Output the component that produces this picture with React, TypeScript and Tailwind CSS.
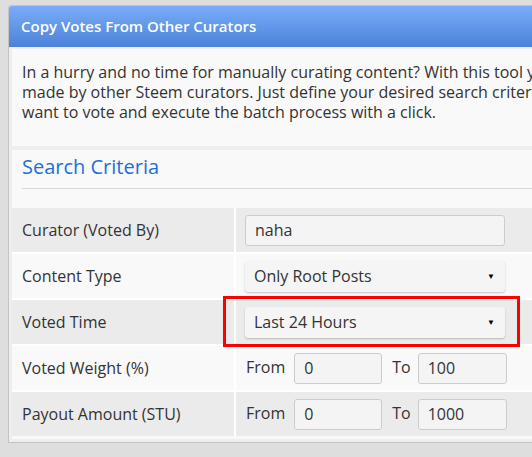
import React from "react";

const rows = [
  { label: "Curator (Voted By)", kind: "input", value: "naha" },
  { label: "Content Type", kind: "select", value: "Only Root Posts" },
  { label: "Voted Time", kind: "select", value: "Last 24 Hours", marked: true },
  { label: "Voted Weight (%)", kind: "range", from: "0", to: "100" },
  { label: "Payout Amount (STU)", kind: "range", from: "0", to: "1000" },
];

function Select({ value }: { value: string }) {
  return (
    <div className="flex h-[31px] w-[260px] items-center justify-between rounded-[3px] bg-[#f5f5f5] pl-[9px] pr-[10px] shadow-[0_1px_2px_rgba(0,0,0,0.22)]">
      <span>{value}</span>
      <span className="text-[8px] text-black">▼</span>
    </div>
  );
}

function Field({ value, w }: { value: string; w: string }) {
  return (
    <div className={`flex h-[31px] ${w} items-center rounded-[3px] border border-[#cccccc] bg-[#f4f4f4] px-[9px]`}>
      {value}
    </div>
  );
}

export default function App() {
  return (
    <div
      className="h-[457px] w-[532px] overflow-hidden bg-[#dedede] pt-[5px] pl-[8px] text-[16px] text-[#333333]"
      style={{ fontFamily: '"Open Sans", "Liberation Sans", sans-serif' }}
    >
      <div className="w-[640px] overflow-hidden rounded-tl-[4px] border-t border-l border-b border-[#c4c4c4] bg-[#eeeeee]">
        {/* Header */}
        <div className="flex h-[41px] items-center bg-gradient-to-b from-[#7aacf8] to-[#4c82d9] pl-[12px] text-[15px] font-semibold text-white">
          Copy Votes From Other Curators
        </div>

        <div className="px-[3px] pt-[2px] pb-[3px]">
          {/* Intro */}
          <div className="h-[97px] bg-[#f9f9f9] pl-[10px] pt-[13px] leading-[20px] whitespace-nowrap">
            In a hurry and no time for manually curating content? With this tool you can
            <br />
            made by other Steem curators. Just define your desired search criteria
            <br />
            want to vote and execute the batch process with a click.
          </div>

          {/* Search criteria */}
          <div className="mt-[4px] bg-[#f9f9f9] pb-[3px]">
            <div className="px-[10px]">
              <div className="border-b border-[#d8d8d8] pt-[3px] pb-[7px] text-[20px] leading-[28px] text-[#1d6fd8]">
                Search Criteria
              </div>
            </div>
            <div className="mt-[19px] flex flex-col gap-[2px] bg-white">
              {rows.map((r, i) => (
                <div
                  key={r.label}
                  className={`flex h-[44px] ${i % 2 === 0 ? "bg-[#ebebeb]" : "bg-[#f9f9f9]"}`}
                >
                  <div className="flex w-[222px] items-center pl-[10px]">{r.label}</div>
                  <div className="w-[2px] bg-white" />
                  <div className="relative flex flex-1 items-center pl-[9px]">
                    {r.kind === "input" && <Field value={r.value!} w="w-[260px]" />}
                    {r.kind === "select" && <Select value={r.value!} />}
                    {r.kind === "range" && (
                      <div className="flex items-center">
                        <span className="mr-[9px] -mt-[2px] pl-[1px]">From</span>
                        <Field value={r.from!} w="w-[88px]" />
                        <span className="mr-[7px] ml-[10px] -mt-[2px]">To</span>
                        <Field value={r.to!} w="w-[89px]" />
                      </div>
                    )}
                    {r.marked && (
                      <div className="pointer-events-none absolute -top-[4px] left-[-13px] h-[51px] w-[297px] border-[3px] border-[#ff0000]" />
                    )}
                  </div>
                </div>
              ))}
            </div>
          </div>
        </div>
      </div>
    </div>
  );
}
